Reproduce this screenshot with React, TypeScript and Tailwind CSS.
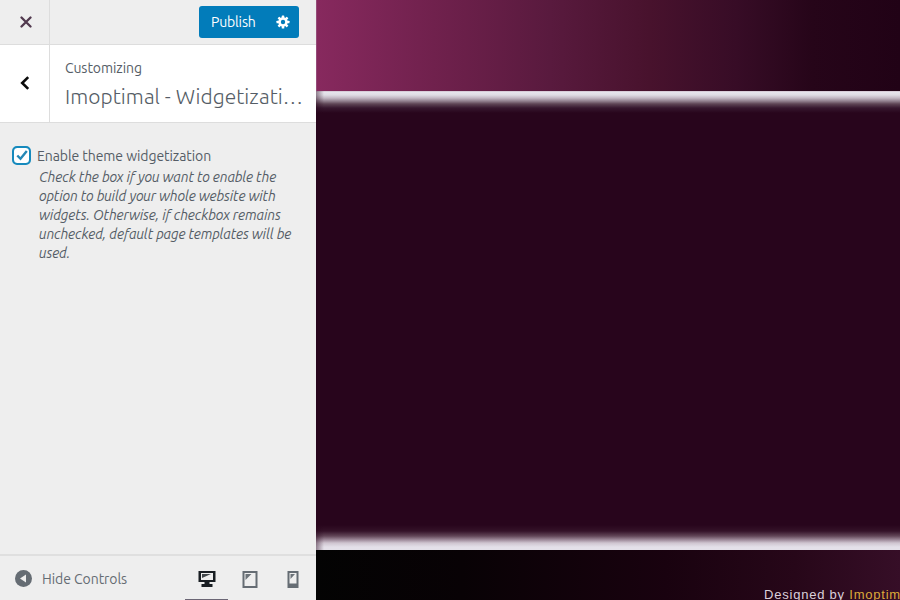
import type { ReactNode } from 'react';

const DESCRIPTION = [
  'Check the box if you want to enable the',
  'option to build your whole website with',
  'widgets. Otherwise, if checkbox remains',
  'unchecked, default page templates will be',
  'used.',
];

function TopBar() {
  return (
    <header className="flex h-[45px] shrink-0 border-b border-[#dddddd]">
      <button aria-label="Close" className="flex w-[50px] items-center justify-center border-r border-[#dddddd]">
        <svg width="12" height="12" viewBox="0 0 12 12" className="mb-px ml-0.5">
          <path d="M1.5 1.5 10.5 10.5M10.5 1.5 1.5 10.5" stroke="#51394e" strokeWidth="2.3" strokeLinecap="round" />
        </svg>
      </button>
      <div className="flex flex-1 items-start justify-end pt-1.5 pr-[17px]">
        <div className="flex h-8 w-[100px] items-center rounded-[3px] bg-[#027cba] text-white">
          <span className="w-[67px] pl-3 text-[14px] leading-8 tracking-[-0.15px]">Publish</span>
          <svg width="14" height="14" viewBox="0 0 14 14" className="ml-[10px]">
            <g fill="#fff">
              <rect x="5.7" y="0.5" width="2.6" height="13" rx=".6" />
              <rect x="5.7" y="0.5" width="2.6" height="13" rx=".6" transform="rotate(45 7 7)" />
              <rect x="5.7" y="0.5" width="2.6" height="13" rx=".6" transform="rotate(90 7 7)" />
              <rect x="5.7" y="0.5" width="2.6" height="13" rx=".6" transform="rotate(135 7 7)" />
              <circle cx="7" cy="7" r="4.7" />
            </g>
            <circle cx="7" cy="7" r="2.2" fill="#027cba" />
          </svg>
        </div>
      </div>
    </header>
  );
}

function SectionTitle() {
  return (
    <div className="flex h-[78px] shrink-0 border-b border-[#dddddd] bg-white">
      <button aria-label="Back" className="flex w-[50px] items-center justify-center border-r border-[#dddddd]">
        <svg width="10" height="16" viewBox="0 0 10 16" className="mb-0.5">
          <path d="M8.2 2.1 2.2 8l6 5.9" fill="none" stroke="#0b0b0b" strokeWidth="2.6" />
        </svg>
      </button>
      <div className="pt-[13px] pl-[15px] whitespace-nowrap">
        <div className="text-[14px] leading-5 tracking-[-0.05px]">Customizing</div>
        <h1 className="mt-[5px] text-[21px] leading-[26px] font-light tracking-[0.06px]">Imoptimal - Widgetizati…</h1>
      </div>
    </div>
  );
}

function DeviceButton({ active = false, children }: { active?: boolean; children: ReactNode }) {
  return (
    <button className={`flex h-[45px] w-[43px] items-center justify-center border-b-2 pt-[3px] ${active ? 'border-[#6b6675]' : 'border-transparent'}`}>
      {children}
    </button>
  );
}

function FooterBar() {
  return (
    <footer className="flex h-[46px] shrink-0 border-t-2 border-[#dfdfdf] text-[#656c73]">
      <button className="flex h-[44px] items-center gap-[10px] pl-[15px]">
        <svg width="17" height="17" viewBox="0 0 17 17">
          <circle cx="8.5" cy="8.5" r="8.5" fill="#656c73" />
          <path d="M11 4.5v8L5 8.5z" fill="#eee" />
        </svg>
        <span className="w-[90px] pt-[3px] text-left text-[14px] tracking-[-0.05px] whitespace-nowrap">Hide Controls</span>
      </button>
      <div className="ml-auto flex pr-[2px]">
        <DeviceButton active>
          <svg width="18" height="18" viewBox="0 0 18 18">
            <path fillRule="evenodd" d="M.5 1h17v11h-6v2h3v3h-11v-3h3v-2h-6zM3 3v7h12V3z" fill="#191e23" />
            <path d="M4 4h9L4 8z" fill="#42474b" />
          </svg>
        </DeviceButton>
        <DeviceButton>
          <svg width="18" height="18" viewBox="0 0 18 18">
            <path fillRule="evenodd" d="M1.5 1h15v17h-15zM3.5 3v13h11V3z" fill="#656c73" />
            <path d="M4.5 4h6l-6 6z" fill="#6c7379" />
          </svg>
        </DeviceButton>
        <DeviceButton>
          <svg width="18" height="18" viewBox="0 0 18 18">
            <path fillRule="evenodd" d="M3.5 1h11v17h-11zM5.5 3v10.5h7V3z" fill="#656c73" />
            <path d="M6.5 4h4.5l-4.5 5z" fill="#6c7379" />
          </svg>
        </DeviceButton>
      </div>
    </footer>
  );
}

function Preview() {
  return (
    <main className="flex min-w-0 flex-1 flex-col bg-[#26051b]">
      <div className="h-[91px] shrink-0 border-l border-[#954b79] bg-[linear-gradient(90deg,#87295e_0%,#70214d_20%,#591a3e_40%,#48122d_57%,#370c26_72%,#260519_85%,#210216_100%)]" />
      <section className="relative h-[459px] shrink-0 bg-[linear-gradient(180deg,#c9b6c5_0px,#e7e5ed_1px,#dfdce4_4px,#c2b7c3_7px,#938290_10px,#5d4454_13px,#36172e_17px,#28051c_22px,#28051c_434px,#341228_440px,#624658_445px,#a18d9d_449px,#cfc5d0_452px,#e4e0e9_456px,#e4e0e9_458.5px,#382035_459px)]">
        <div className="absolute inset-y-0 left-0 w-[8px] bg-linear-to-r from-[#28051c]/45 to-transparent" />
      </section>
      <footer className="flex-1 overflow-hidden bg-[linear-gradient(90deg,#030303_0%,#080205_25%,#19020f_60%,#270719_82%,#360e27_100%)] pt-[37px] pl-[448px] font-['Liberation_Sans',Arial,sans-serif] text-[13px] leading-4 tracking-[0.78px] whitespace-nowrap text-[#dbd0db]">
        Designed by <span className="text-[#dca93a]">Imoptimal</span>
      </footer>
    </main>
  );
}

export default function App() {
  return (
    <div className="flex h-[600px] w-[900px] overflow-hidden bg-[#eeeeee] font-['Ubuntu','Noto_Sans',sans-serif] text-[#555d66]">
      <aside className="flex w-[316px] shrink-0 flex-col">
        <TopBar />
        <SectionTitle />
        <div className="flex-1 pt-[21px] pl-3">
          <label className="flex items-center gap-[6px]">
            <span className="flex size-[19px] items-center justify-center rounded-[5px] border-[2.5px] border-[#168abd] bg-white outline-1 -outline-offset-[2.5px] outline-[#168abd]/50">
              <svg width="14" height="14" viewBox="0 0 14 14" className="shrink-0">
                <path d="m2.3 7.5 3.2 3.3L11.8 3" fill="none" stroke="#2587b5" strokeWidth="2.4" />
              </svg>
            </span>
            <span className="pt-0.5 text-[14px] leading-5 tracking-[-0.07px] whitespace-nowrap">Enable theme widgetization</span>
          </label>
          <p className="pt-0.5 pl-[27px] text-[14px] leading-[19px] tracking-[-0.13px] whitespace-nowrap italic">
            {DESCRIPTION.map((line) => (
              <span key={line} className="block">{line}</span>
            ))}
          </p>
        </div>
        <FooterBar />
      </aside>
      <Preview />
    </div>
  );
}
